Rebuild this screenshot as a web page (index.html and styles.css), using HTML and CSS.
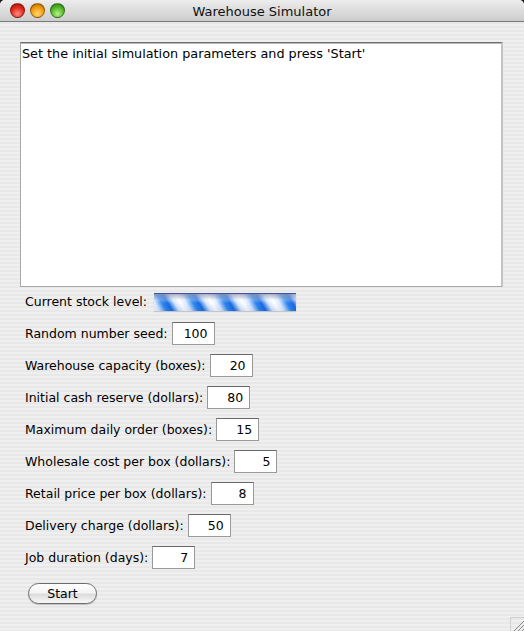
FILE: index.html
```html
<!DOCTYPE html>
<html>
<head>
<meta charset="utf-8">
<link rel="stylesheet" href="styles.css">
</head>
<body>
<div class="window">
  <div class="titlebar">
    <div class="lights">
      <span class="light red"></span>
      <span class="light yellow"></span>
      <span class="light green"></span>
    </div>
    <div class="title">Warehouse Simulator</div>
  </div>
  <div class="content">
    <div class="output">Set the initial simulation parameters and press 'Start'</div>
    <div class="form">
      <div class="row"><span class="label">Current stock level:</span><div class="progress"></div></div>
      <div class="row"><span class="label">Random number seed:</span><div class="field">100</div></div>
      <div class="row"><span class="label">Warehouse capacity (boxes):</span><div class="field">20</div></div>
      <div class="row"><span class="label">Initial cash reserve (dollars):</span><div class="field">80</div></div>
      <div class="row"><span class="label">Maximum daily order (boxes):</span><div class="field">15</div></div>
      <div class="row"><span class="label">Wholesale cost per box (dollars):</span><div class="field">5</div></div>
      <div class="row"><span class="label">Retail price per box (dollars):</span><div class="field">8</div></div>
      <div class="row"><span class="label">Delivery charge (dollars):</span><div class="field">50</div></div>
      <div class="row"><span class="label">Job duration (days):</span><div class="field">7</div></div>
    </div>
    <div class="actions"><button class="btn">Start</button></div>
  </div>
  <svg class="grip" width="14" height="14" viewBox="0 0 14 14">
    <line x1="0.5" y1="0" x2="0.5" y2="14" stroke="#d0d0d0"/>
    <line x1="0" y1="0.5" x2="14" y2="0.5" stroke="#d0d0d0"/>
    <line x1="4" y1="14" x2="14" y2="4" stroke="#888"/>
    <line x1="8" y1="14" x2="14" y2="8" stroke="#888"/>
    <line x1="12" y1="14" x2="14" y2="12" stroke="#888"/>
  </svg>
</div>
</body>
</html>
```

FILE: styles.css
```css
html, body {
  margin: 0;
  padding: 0;
  background: #1a1a1a;
}
.window {
  position: relative;
  width: 524px;
  height: 631px;
  overflow: hidden;
  border-radius: 5px 5px 0 0;
  background: repeating-linear-gradient(to bottom, #efefef 0px, #efefef 2px, #e8e8e8 2px, #e8e8e8 4px);
  font-family: "DejaVu Sans", "Liberation Sans", sans-serif;
  font-size: 12.5px;
  color: #000;
}
.titlebar {
  position: relative;
  height: 21px;
  border-bottom: 1px solid #7a7a7a;
  background: linear-gradient(to bottom, #ededed 0%, #dcdcdc 50%, #cdcdcd 100%);
  display: flex;
  align-items: center;
  justify-content: center;
}
.lights {
  position: absolute;
  left: 10px;
  top: 3px;
  display: flex;
  gap: 5px;
}
.light {
  width: 15px;
  height: 15px;
  border-radius: 50%;
  box-sizing: border-box;
  border: 1px solid rgba(0,0,0,0.35);
}
.red { background: radial-gradient(circle at 50% 75%, #ff8c80 0%, #e0281c 55%, #a01008 100%); }
.yellow { background: radial-gradient(circle at 50% 75%, #ffd870 0%, #f09a10 55%, #b06000 100%); }
.green { background: radial-gradient(circle at 50% 75%, #b8f08c 0%, #50b828 55%, #2a7a10 100%); }
.title {
  font-size: 13px;
  color: #111;
  padding-top: 1px;
}
.content {
  padding: 20px 21px 0 20px;
}
.output {
  background: #fff;
  border: 1px solid #a8a8a8;
  border-top-color: #6e6e6e;
  border-right: 2px solid #c4c4c4;
  box-shadow: inset 0 1px 0 #b8b8b8;
  padding: 3px 1px;
  box-sizing: border-box;
  height: 245px;
  line-height: 15px;
  font-size: 12.8px;
}
.form {
  display: flex;
  flex-direction: column;
  gap: 9px;
  padding: 3px 0 0 5px;
}
.row {
  display: flex;
  align-items: center;
  gap: 4px;
  height: 23px;
}
.progress {
  margin-left: 3px;
  width: 142px;
  height: 18px;
  box-sizing: border-box;
  border-top: 1px solid #3b50b0;
  background:
    linear-gradient(to bottom, rgba(150,150,170,0.75) 0%, rgba(255,255,255,0.25) 35%, rgba(255,255,255,0) 55%, rgba(0,40,150,0.1) 100%),
    repeating-linear-gradient(60deg, #ffffff 0px, #d8e8ff 5px, #2e86ee 11px, #1a6be0 16px, #d8e8ff 22px, #ffffff 27px);
  box-shadow: 0 1px 1px rgba(0,0,0,0.15);
}
.field {
  width: 43px;
  height: 23px;
  box-sizing: border-box;
  background: #fff;
  border: 1px solid #9a9a9a;
  border-top-color: #6a6a6a;
  text-align: right;
  padding-right: 6px;
  line-height: 21px;
  font-size: 12.5px;
}
.actions {
  padding: 14px 0 0 8px;
}
.btn {
  width: 69px;
  height: 21px;
  border-radius: 11px;
  border: 1px solid #6c6c6c;
  background: linear-gradient(to bottom, #ffffff 0%, #f4f4f4 45%, #dcdcdc 55%, #f8f8f8 100%);
  box-shadow: 0 1px 1px rgba(0,0,0,0.2);
  font-family: "DejaVu Sans", "Liberation Sans", sans-serif;
  font-size: 12.5px;
  color: #000;
  padding: 0;
  line-height: 19px;
}
.grip {
  position: absolute;
  right: 0;
  bottom: 0;
}
```
